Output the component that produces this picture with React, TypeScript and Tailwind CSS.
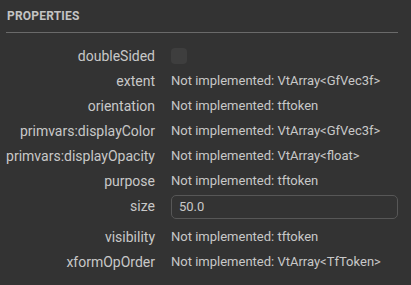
import React from 'react';

const rows: { label: string; value?: string; kind?: 'check' | 'input' }[] = [
  { label: 'doubleSided', kind: 'check' },
  { label: 'extent', value: 'Not implemented: VtArray<GfVec3f>' },
  { label: 'orientation', value: 'Not implemented: tftoken' },
  { label: 'primvars:displayColor', value: 'Not implemented: VtArray<GfVec3f>' },
  { label: 'primvars:displayOpacity', value: 'Not implemented: VtArray<float>' },
  { label: 'purpose', value: 'Not implemented: tftoken' },
  { label: 'size', kind: 'input', value: '50.0' },
  { label: 'visibility', value: 'Not implemented: tftoken' },
  { label: 'xformOpOrder', value: 'Not implemented: VtArray<TfToken>' },
];

export default function App() {
  return (
    <div
      className="w-[411px] h-[285px] bg-[#333333] text-[#c8c8c8] overflow-hidden"
      style={{ fontFamily: 'Roboto, "Noto Sans", sans-serif' }}
    >
      <div className="px-[7px] py-[8px] text-[12px] leading-[16px] font-bold text-[#c4c4c4] tracking-[0.2px]">
        PROPERTIES
      </div>
      <div className="ml-[6px] mr-[13px] h-px bg-[#6a6a6a]" />

      <div className="grid grid-cols-[155px_1fr] gap-x-[16px] pt-[10px] pr-[13px] leading-[18px]">
        {rows.map((r) => (
          <React.Fragment key={r.label}>
            <div
              className={
                'text-[14px] flex justify-end whitespace-nowrap ' +
                (r.kind === 'input' ? 'h-[31px] pt-[3.5px]' : 'h-[25px] items-center')
              }
            >
              {r.label}
            </div>
            <div
              className={
                'text-[13px] flex ' + (r.kind === 'input' ? 'h-[31px] pt-[1.5px]' : 'h-[25px] items-center')
              }
            >
              {r.kind === 'check' && (
                <div className="w-[16px] h-[16px] rounded-[4px] bg-[#3e3e3e]" />
              )}
              {r.kind === 'input' && (
                <div className="w-full h-[24px] border border-[#575757] rounded-[5px] px-[7px] flex items-center">
                  {r.value}
                </div>
              )}
              {!r.kind && <span className="whitespace-nowrap">{r.value}</span>}
            </div>
          </React.Fragment>
        ))}
      </div>
    </div>
  );
}
